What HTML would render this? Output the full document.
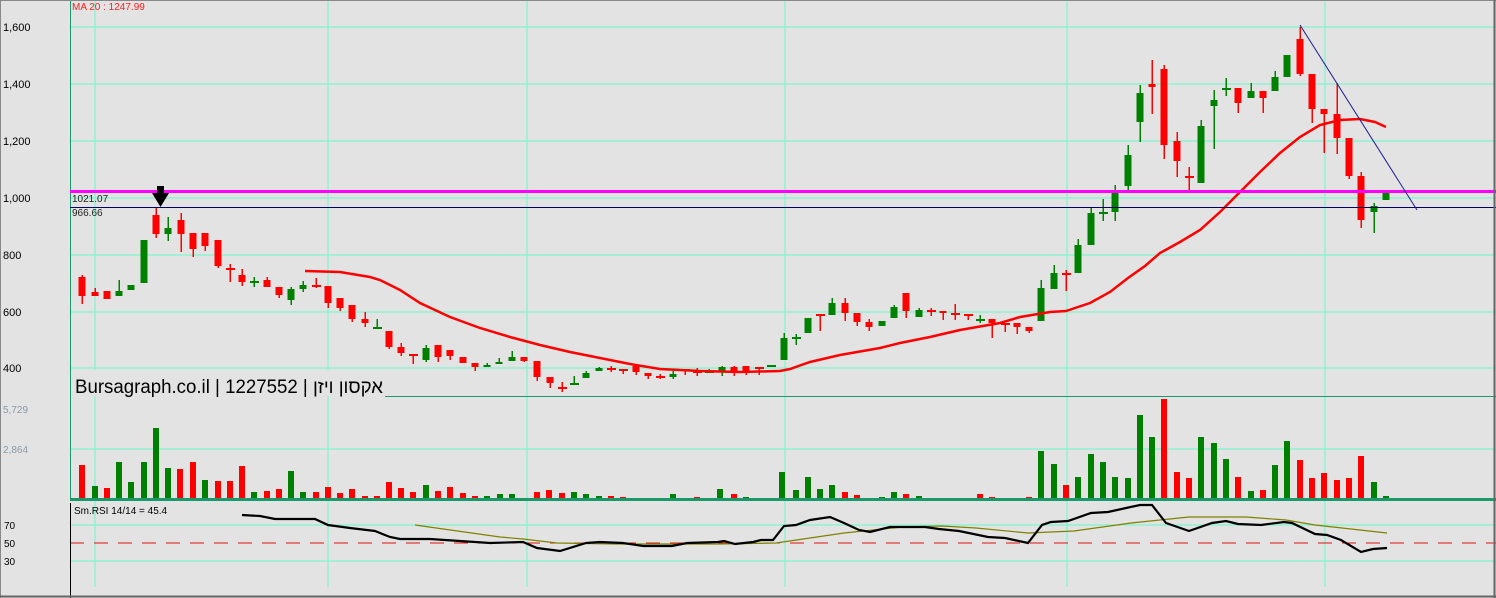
<!DOCTYPE html>
<html><head><meta charset="utf-8"><style>
html,body{margin:0;padding:0;background:#e3e3e3;}
svg{display:block;font-family:"Liberation Sans",sans-serif;}
</style></head><body>
<svg id="s" width="1496" height="598" xmlns="http://www.w3.org/2000/svg">
<rect width="1496" height="598" fill="#e3e3e3"/>
<g stroke="#7ff5cf" stroke-width="1.2" id="grid">
<line x1="70" y1="27" x2="1496" y2="27"/><line x1="70" y1="84" x2="1496" y2="84"/><line x1="70" y1="141" x2="1496" y2="141"/><line x1="70" y1="198" x2="1496" y2="198"/><line x1="70" y1="255" x2="1496" y2="255"/><line x1="70" y1="312" x2="1496" y2="312"/><line x1="70" y1="368" x2="1496" y2="368"/>
<line x1="70" y1="449" x2="1496" y2="449"/>
<line x1="70" y1="525" x2="1496" y2="525"/><line x1="70" y1="561" x2="1496" y2="561"/>
<line x1="95" y1="0" x2="95" y2="587"/><line x1="328" y1="0" x2="328" y2="587"/><line x1="527" y1="0" x2="527" y2="587"/><line x1="785" y1="0" x2="785" y2="587"/><line x1="1067" y1="0" x2="1067" y2="587"/><line x1="1325" y1="0" x2="1325" y2="587"/>
</g>
<line x1="70" y1="543" x2="1496" y2="543" stroke="#e01010" stroke-width="1" stroke-dasharray="14,10"/>
<line x1="70.5" y1="0" x2="70.5" y2="500" stroke="#1a9a6a" stroke-width="1"/>
<line x1="70.5" y1="503" x2="70.5" y2="598" stroke="#000" stroke-width="1"/>
<g id="cand"></g>
<polyline fill="none" stroke="#ff0000" stroke-width="2.5" points="305,271 340,272 370,277 380,280 400,290 420,303 450,317 480,328 510,337 540,345 570,352 600,358 630,364 660,369 700,371 740,372 780,371 790,369 810,362 840,355 880,348 900,343 930,337 960,330 1000,323 1020,317 1050,312 1066,311 1090,303 1110,292 1128,278 1145,266 1160,253 1180,242 1200,230 1220,212 1240,192 1260,172 1280,153 1300,137 1320,125 1340,120 1360,119 1375,122 1386,127"/>
<line x1="70" y1="191.5" x2="1496" y2="191.5" stroke="#ff00ff" stroke-width="3"/>
<line x1="70" y1="207.5" x2="1496" y2="207.5" stroke="#000060" stroke-width="1"/>
<line x1="1300" y1="25" x2="1417" y2="210" stroke="#1a1a90" stroke-width="1"/>
<rect x="157" y="186" width="7" height="7" fill="#000"/><polygon points="152,193 169,193 160.5,207" fill="#000"/>
<text x="72" y="10" font-size="10" fill="#ff2020">MA 20 : 1247.99</text>
<text x="72" y="202" font-size="10" fill="#222">1021.07</text>
<text x="72" y="216" font-size="10" fill="#222">966.66</text>
<g font-size="11" fill="#000">
<text x="3" y="31">1,600</text><text x="3" y="88">1,400</text><text x="3" y="145">1,200</text><text x="3" y="202">1,000</text><text x="3" y="259">800</text><text x="3" y="316">600</text><text x="3" y="372">400</text>
</g>
<g font-size="10" fill="#8a9aa8"><text x="3" y="413">5,729</text><text x="3" y="453">2,864</text></g>
<g font-size="10" fill="#000"><text x="4" y="529">70</text><text x="4" y="547">50</text><text x="4" y="565">30</text></g>
<text x="74" y="514" font-size="10" fill="#000">Sm.RSI 14/14 = 45.4</text>
<rect x="71" y="370" width="314" height="26" fill="#e3e3e3"/>
<line x1="385" y1="396.5" x2="1496" y2="396.5" stroke="#1a9a6a" stroke-width="1"/>
<text x="75" y="393" font-size="19" fill="#000" textLength="308" lengthAdjust="spacingAndGlyphs" style='font-family:"Liberation Sans","Noto Sans CJK SC",sans-serif'>Bursagraph.co.il | 1227552 | <tspan>אקסון ויזן</tspan></text>
<g id="vol"></g>
<line x1="70" y1="499.5" x2="1496" y2="499.5" stroke="#1a9a6a" stroke-width="3"/>
<polyline fill="none" stroke="#808000" stroke-width="1.2" points="415,525 500,537 523,539 557,543 615,544 718,544 776,543 844,533 902,527 942,526 976,528 1028,533 1074,531 1131,523 1189,517 1246,517 1286,520 1315,525 1387,533"/>
<polyline fill="none" stroke="#000" stroke-width="2.2" points="242,515 260,516 275,519 315,519 328,525 350,528 375,531 390,537 400,539 430,539 460,541 490,543 523,542 537,548 560,551 586,543 600,542 623,543 643,546 672,546 687,543 718,542 724,541 735,544 753,542 761,540 773,540 784,526 796,525 810,520 830,517 844,523 859,530 870,532 890,527 925,527 939,529 959,531 988,537 1005,538 1028,543 1042,525 1051,522 1068,521 1091,513 1108,512 1126,508 1140,505 1152,505 1166,523 1189,531 1212,523 1226,521 1238,524 1261,525 1284,522 1292,523 1315,534 1327,535 1341,540 1361,552 1373,549 1387,548"/>
<line x1="0" y1="0.5" x2="1496" y2="0.5" stroke="#888"/>
<line x1="0.5" y1="0" x2="0.5" y2="598" stroke="#888"/>
<line x1="1494.5" y1="0" x2="1494.5" y2="598" stroke="#666" stroke-width="2"/>
<line x1="0" y1="596.5" x2="1496" y2="596.5" stroke="#666" stroke-width="2"/>
</svg>
<script>
var R="#ff0000",G="#008000";
var C=[[82,277,296,275,304,R],[95,292,296,288,296,R],[107,291,299,291,299,R],[119,291,296,280,296,G],[131,285,290,285,290,G],[144,240,283,240,283,G],[156,215,234,208,238,R],[168,228,234,217,241,G],[181,220,234,213,252,R],[193,233,249,233,257,R],[205,233,246,233,251,R],[218,240,266,240,268,R],[230,268,269,264,282,R],[242,275,282,269,286,R],[254,281,282,277,287,G],[267,280,287,277,287,R],[279,287,295,287,298,R],[291,289,300,287,305,G],[303,285,289,281,292,G],[316,285,286,278,288,R],[328,286,303,286,308,R],[340,298,308,298,311,R],[352,305,319,305,322,R],[365,319,323,312,327,R],[377,327,328,319,328,G],[389,331,347,331,349,R],[401,347,353,343,356,R],[413,354,355,354,364,R],[426,348,360,345,362,G],[438,345,357,345,362,R],[450,350,356,350,360,R],[463,357,363,357,363,R],[475,363,367,363,371,R],[487,365,367,363,367,G],[499,362,364,358,364,G],[512,357,361,351,361,G],[524,357,361,357,362,R],[537,361,377,361,381,R],[550,377,383,377,388,R],[562,387,388,382,392,R],[574,383,384,376,384,G],[586,373,378,371,378,G],[599,368,371,367,371,G],[611,368,369,366,372,R],[623,369,370,369,374,R],[636,366,372,366,375,R],[648,373,376,373,379,R],[660,376,377,374,379,R],[673,374,377,371,379,G],[685,369,370,369,375,R],[697,371,372,368,376,R],[709,371,372,369,372,G],[722,367,372,366,376,G],[734,367,373,366,376,R],[746,366,371,366,375,R],[759,367,368,367,375,R],[771,365,366,365,366,G],[784,338,360,333,360,G],[796,337,338,334,345,G],[808,318,333,318,333,G],[820,314,315,314,331,R],[832,303,315,298,315,G],[845,303,313,298,321,R],[857,313,322,313,326,R],[869,322,327,319,331,R],[882,321,326,321,326,G],[894,307,318,305,318,G],[906,293,311,293,318,R],[919,310,317,308,317,G],[931,310,311,308,316,R],[943,311,313,311,320,R],[955,313,314,304,320,R],[968,314,315,314,320,R],[980,319,320,315,323,G],[992,319,323,319,338,R],[1005,323,324,323,332,R],[1017,323,327,323,334,R],[1029,327,331,327,333,R],[1041,288,321,280,321,G],[1054,273,289,265,289,G],[1066,273,274,270,291,R],[1078,245,273,239,273,G],[1091,213,245,208,245,G],[1103,212,213,199,221,G],[1115,190,212,185,221,G],[1128,155,186,145,190,G],[1140,93,122,85,142,G],[1152,84,87,60,114,R],[1164,69,145,65,159,R],[1177,141,161,132,177,R],[1189,176,177,167,191,R],[1201,126,183,120,183,G],[1214,100,106,90,149,G],[1226,88,89,78,96,G],[1238,88,103,88,113,R],[1251,91,98,83,98,G],[1263,91,98,91,113,R],[1275,77,91,71,91,G],[1287,55,77,55,77,G],[1300,39,74,27,76,R],[1312,74,109,74,123,R],[1324,109,114,109,153,R],[1337,114,138,83,154,R],[1349,138,176,138,179,R],[1361,176,220,172,228,R],[1374,206,212,203,233,G],[1386,193,200,193,200,G]];
var V=[[82,465,R],[95,486,G],[107,488,R],[119,462,G],[131,482,G],[144,462,G],[156,428,G],[168,468,G],[180,469,R],[193,462,R],[205,480,G],[218,481,R],[230,481,R],[242,466,R],[254,492,G],[267,491,R],[279,489,R],[291,471,G],[303,492,G],[316,492,R],[328,487,R],[340,493,R],[352,489,R],[365,496,R],[377,496,R],[389,482,R],[401,488,R],[413,492,R],[426,485,G],[438,491,R],[450,487,R],[463,493,R],[475,496,R],[487,496,G],[500,494,G],[512,494,G],[524,498,R],[537,492,R],[549,490,R],[562,493,R],[574,492,G],[586,494,G],[599,496,G],[611,496,R],[623,497,R],[636,498,R],[648,498,R],[673,494,G],[685,498,G],[697,497,R],[720,489,G],[734,494,R],[746,497,G],[759,498,G],[782,472,G],[796,490,G],[808,477,G],[820,489,G],[832,485,G],[845,492,R],[857,495,R],[869,498,R],[882,497,G],[894,492,G],[906,494,R],[919,496,G],[931,498,R],[943,498,R],[955,498,R],[968,498,R],[980,494,R],[992,497,R],[1005,498,R],[1017,498,R],[1029,497,R],[1041,451,G],[1054,464,G],[1066,485,R],[1078,477,G],[1091,454,G],[1103,462,G],[1115,477,G],[1128,478,G],[1140,415,G],[1152,437,G],[1164,399,R],[1177,472,R],[1189,478,R],[1201,437,G],[1214,443,G],[1226,459,G],[1238,477,R],[1251,491,G],[1263,490,R],[1275,465,G],[1287,441,G],[1300,460,R],[1312,478,R],[1324,473,R],[1337,480,R],[1349,478,R],[1361,456,R],[1374,482,G],[1386,496,G]];
var ns="http://www.w3.org/2000/svg",cg=document.getElementById("cand"),vg=document.getElementById("vol");
function el(g,t,a){var e=document.createElementNS(ns,t);for(var k in a)e.setAttribute(k,a[k]);g.appendChild(e);}
C.forEach(function(c){
 el(cg,"rect",{x:c[0]-0.5,y:c[3],width:1.5,height:Math.max(1,c[4]-c[3]),fill:c[5]});
 var h=c[2]-c[1];
 if(h<=1){el(cg,"rect",{x:c[0]-4,y:c[1],width:9,height:2,fill:c[5]});}
 else el(cg,"rect",{x:c[0]-3.5,y:c[1],width:7,height:h,fill:c[5]});
});
V.forEach(function(v){el(vg,"rect",{x:v[0]-3,y:v[1],width:6,height:499-v[1],fill:v[2]});});
</script>
</body></html>
